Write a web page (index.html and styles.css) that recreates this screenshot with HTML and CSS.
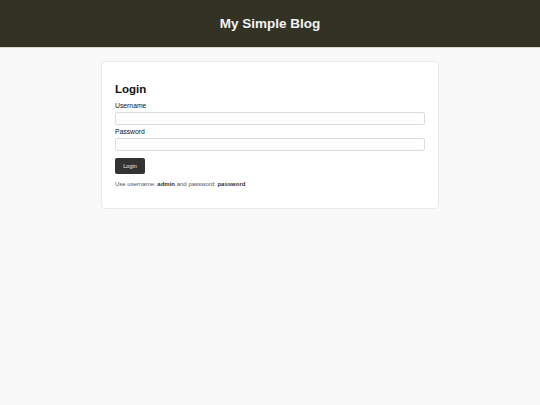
FILE: index.html
```html
<!DOCTYPE html>
<html>
<head>
<meta charset="utf-8">
<title>My Simple Blog</title>
<link rel="stylesheet" href="styles.css">
</head>
<body>
<header class="site-header">
  <h1 class="site-title">My Simple Blog</h1>
</header>
<main class="main">
  <section class="card">
    <h2 class="card-title">Login</h2>
    <form class="form">
      <label class="label" for="u">Username</label>
      <input class="input" id="u" type="text">
      <label class="label" for="p">Password</label>
      <input class="input" id="p" type="password">
      <button class="btn" type="button">Login</button>
    </form>
    <p class="hint">Use username: <strong>admin</strong> and password: <strong>password</strong></p>
  </section>
</main>
</body>
</html>
```
FILE: styles.css
```css
html, body {
  margin: 0;
  padding: 0;
  background: #f9f9f9;
  font-family: "Liberation Sans", Arial, sans-serif;
  color: #222;
}
.site-header {
  background: #333325;
  height: 47px;
  border-bottom: 1px solid #d8d8d0;
  display: flex;
  align-items: center;
  justify-content: center;
}
.site-title {
  margin: 0;
  color: #f4f4f4;
  font-size: 13.5px;
  font-weight: bold;
}
.main {
  display: flex;
  justify-content: center;
  padding-top: 13px;
}
.card {
  width: 338px;
  box-sizing: border-box;
  background: #fff;
  border: 1px solid #ebebeb;
  border-radius: 4px;
  box-shadow: 0 1px 2px rgba(0,0,0,0.04);
  padding: 21px 13px 21px;
}
.card-title {
  margin: 0 0 7px;
  font-size: 11.5px;
  font-weight: bold;
  color: #111;
}
.form {
  display: flex;
  flex-direction: column;
  align-items: flex-start;
}
.label {
  font-size: 6.8px;
  line-height: 8px;
  color: #111;
  margin-bottom: 2px;
}
.input {
  width: 100%;
  box-sizing: border-box;
  height: 13px;
  border: 1px solid #dcdcdc;
  border-radius: 2px;
  margin: 0 0 3px;
  padding: 0;
  background: #fff;
}
.btn {
  margin-top: 4px;
  width: 30px;
  height: 16px;
  padding: 0;
  background: #333;
  color: #eee;
  border: none;
  border-radius: 2px;
  font-family: "Liberation Sans", Arial, sans-serif;
  font-size: 5.5px;
}
.hint {
  margin: 7px 0 0;
  font-size: 6px;
  color: #555;
}
.hint strong {
  color: #333;
}
```
